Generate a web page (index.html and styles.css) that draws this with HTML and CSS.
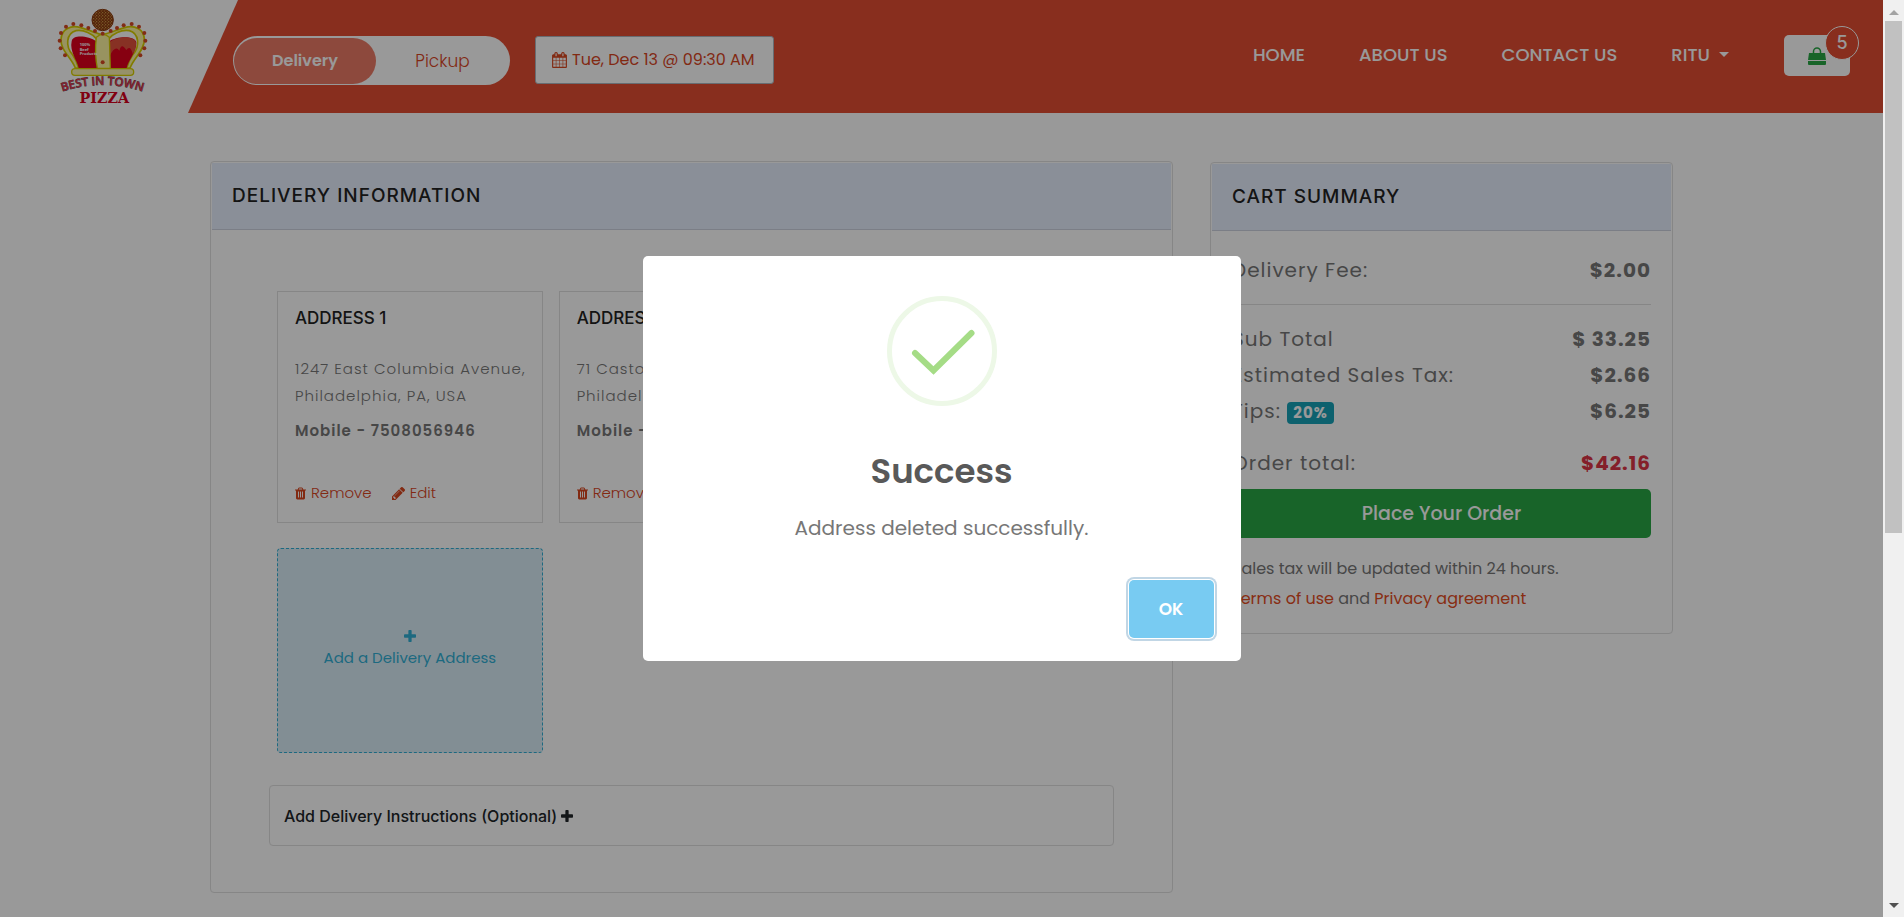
FILE: index.html
```html
<!DOCTYPE html>
<html lang="en">
<head>
<meta charset="utf-8">
<meta name="viewport" content="width=device-width, initial-scale=1">
<title>Best in Town Pizza - Checkout</title>
<link rel="stylesheet" href="styles.css">
</head>
<body>
<svg class="sprite" aria-hidden="true">
  <symbol id="trash" viewBox="192 128 1408 1536"><path d="M704 1376v-704q0-14-9-23t-23-9h-64q-14 0-23 9t-9 23v704q0 14 9 23t23 9h64q14 0 23-9t9-23zm256 0v-704q0-14-9-23t-23-9h-64q-14 0-23 9t-9 23v704q0 14 9 23t23 9h64q14 0 23-9t9-23zm256 0v-704q0-14-9-23t-23-9h-64q-14 0-23 9t-9 23v704q0 14 9 23t23 9h64q14 0 23-9t9-23zm-544-992h448l-48-117q-7-9-17-11h-317q-10 2-17 11zm928 32v64q0 14-9 23t-23 9h-96v948q0 83-47 143.500t-113 60.500h-832q-66 0-113-58.500t-47-141.500v-952h-96q-14 0-23-9t-9-23v-64q0-14 9-23t23-9h309l70-167q15-37 54-63t79-26h320q40 0 79 26t54 63l70 167h309q14 0 23 9t9 23z"/></symbol>
  <symbol id="pencil" viewBox="128 149 1515 1515"><path d="M491 1536l91-91-235-235-91 91v107h128v128h107zm523-928q0-22-22-22-10 0-17 7l-542 542q-7 7-7 17 0 22 22 22 10 0 17-7l542-542q7-7 7-17zm-54-192l416 416-832 832h-416v-416zm683 96q0 53-37 90l-166 166-416-416 166-165q36-38 90-38 53 0 91 38l235 234q37 39 37 91z"/></symbol>
  <symbol id="calendar" viewBox="64 0 1664 1792"><path d="M192 1664h288v-288h-288v288zm352 0h320v-288h-320v288zm-352-352h288v-320h-288v320zm352 0h320v-320h-320v320zm-352-384h288v-288h-288v288zm736 736h320v-288h-320v288zm-384-736h320v-288h-320v288zm768 736h288v-288h-288v288zm-384-352h320v-320h-320v320zm-352-864v-288q0-13-9.500-22.500t-22.500-9.500h-64q-13 0-22.500 9.500t-9.500 22.500v288q0 13 9.500 22.500t22.500 9.500h64q13 0 22.500-9.500t9.500-22.500zm736 864h288v-320h-288v320zm-384-384h320v-288h-320v288zm384 0h288v-288h-288v288zm32-480v-288q0-13-9.500-22.500t-22.500-9.500h-64q-13 0-22.500 9.500t-9.500 22.500v288q0 13 9.500 22.500t22.500 9.500h64q13 0 22.500-9.500t9.500-22.500zm384-64v1280q0 52-38 90t-90 38h-1408q-52 0-90-38t-38-90v-1280q0-52 38-90t90-38h128v-96q0-66 47-113t113-47h64q66 0 113 47t47 113v96h384v-96q0-66 47-113t113-47h64q66 0 113 47t47 113v96h128q52 0 90 38t38 90z"/></symbol>
  <symbol id="plus" viewBox="192 128 1408 1408"><path d="M1600 736v192q0 40-28 68t-68 28h-416v416q0 40-28 68t-68 28h-192q-40 0-68-28t-28-68v-416h-416q-40 0-68-28t-28-68v-192q0-40 28-68t68-28h416v-416q0-40 28-68t68-28h192q40 0 68 28t28 68v416h416q40 0 68 28t28 68z"/></symbol>
  <symbol id="bag" viewBox="0 0 18 18"><path d="M1 6h16l1 7H0zM0 14h18v3q0 1-1 1H1q-1 0-1-1z"/><path d="M5.500 8V4.500a3.500 3.500 0 0 1 7 0V8" fill="none" stroke="currentColor" stroke-width="1.500"/></symbol>
</svg>

<div class="window">
  <div class="page">
    <header class="header">
      <a class="logo" href="#" aria-label="Best in Town Pizza">
        <svg class="logo-art" viewBox="168 21 282 294" role="img" aria-hidden="true">
          <defs>
            <pattern id="crust" width="9" height="9" patternUnits="userSpaceOnUse">
              <rect width="9" height="9" fill="#8a3a10"/><circle cx="2" cy="2" r="2" fill="#d8a850"/><circle cx="7" cy="6" r="2" fill="#c88a3c"/>
            </pattern>
            <path id="arc" d="M179 277Q308 233 436 277"/>
          </defs>
          <circle cx="308" cy="60" r="32" fill="url(#crust)" stroke="#8a3a10" stroke-width="3"/>
          <g stroke="#d8cf00" stroke-width="5" stroke-linejoin="round">
            <path fill="#fdf6a0" d="M226 204C214 172 182 152 183 119C184 86 214 74 242 83C268 90 294 102 306 104C322 102 350 90 374 83C402 74 433 86 433 119C433 152 402 172 390 204Z"/>
            <path fill="#fff" d="M217 163C196 140 198 100 228 92C252 88 278 102 289 116L290 200L236 204C232 188 226 176 217 163ZM399 163C420 140 418 100 388 92C362 88 338 102 327 116L330 200L380 204C384 188 390 176 399 163Z"/>
          </g>
          <path fill="#df001d" d="M236 204C232 182 208 154 215 124C219 102 266 108 289 124L293 204Z"/>
          <path fill="#df001d" d="M380 204C384 182 410 154 409 128C407 106 350 108 327 124L330 204Z"/>
          <path fill="#e2523c" d="M329 126C352 108 405 108 408 128Q409 146 398 162Q391 134 379 150Q364 126 358 152Q346 134 329 168Z"/>
          <path d="M289 112Q308 94 328 112L331 205H292Q283 158 289 112Z" fill="#fdf6a0" stroke="#d8cf00" stroke-width="4"/>
          <rect x="215" y="206" width="186" height="20" rx="10" fill="#fbf2b0" stroke="#d8cf00" stroke-width="4"/>
          <g fill="#d84a24">
            <circle cx="195" cy="166" r="6"/><circle cx="182" cy="145" r="6"/><circle cx="179" cy="122" r="6"/><circle cx="183" cy="99" r="6"/><circle cx="198" cy="80" r="6"/><circle cx="220" cy="72" r="6"/><circle cx="244" cy="76" r="6"/><circle cx="265" cy="84" r="6"/><circle cx="285" cy="93" r="6"/><circle cx="308" cy="101" r="6"/><circle cx="332" cy="93" r="6"/><circle cx="351" cy="84" r="6"/><circle cx="371" cy="76" r="6"/><circle cx="395" cy="72" r="6"/><circle cx="417" cy="80" r="6"/><circle cx="433" cy="99" r="6"/><circle cx="436" cy="122" r="6"/><circle cx="433" cy="145" r="6"/><circle cx="421" cy="166" r="6"/><circle cx="308" cy="187" r="6"/>
          </g>
          <g class="logo-small"><text x="239" y="139">100%</text><text x="239" y="152">Beef</text><text x="239" y="166">Products</text></g>
          <text class="logo-town"><textPath href="#arc" startOffset="50%" text-anchor="middle">BEST IN TOWN</textPath></text>
          <text class="logo-pizza" x="313" y="308" text-anchor="middle">PIZZA</text>
        </svg>
      </a>
      <div class="navbar">
        <div class="toggle" role="group" aria-label="Order type">
          <button class="toggle-item is-active" type="button">Delivery</button>
          <button class="toggle-item" type="button">Pickup</button>
        </div>
        <button class="date" type="button"><svg class="icon icon-calendar"><use href="#calendar"/></svg>Tue, Dec 13 @ 09:30 AM</button>
        <nav class="menu">
          <a href="#">HOME</a>
          <a href="#">ABOUT US</a>
          <a href="#">CONTACT US</a>
          <a class="user" href="#">RITU</a>
        </nav>
        <button class="cart" type="button" aria-label="Cart, 5 items"><svg class="icon icon-bag"><use href="#bag"/></svg><span class="cart-count">5</span></button>
      </div>
    </header>

    <main class="content">
      <section class="card">
        <h1 class="card-head">DELIVERY INFORMATION</h1>
        <div class="delivery-body">
          <div class="addresses">
            <article class="address">
              <h2 class="address-title">ADDRESS 1</h2>
              <p class="address-text">1247 East Columbia Avenue, Philadelphia, PA, USA</p>
              <p class="address-phone">Mobile - 7508056946</p>
              <div class="address-actions">
                <a href="#"><svg class="icon icon-trash"><use href="#trash"/></svg>Remove</a>
                <a href="#"><svg class="icon icon-pencil"><use href="#pencil"/></svg>Edit</a>
              </div>
            </article>
            <article class="address">
              <h2 class="address-title">ADDRESS 2</h2>
              <p class="address-text">71 Castor Avenue,<br>Philadelphia, PA, USA</p>
              <p class="address-phone">Mobile - 7508056946</p>
              <div class="address-actions">
                <a href="#"><svg class="icon icon-trash"><use href="#trash"/></svg>Remove</a>
                <a href="#"><svg class="icon icon-pencil"><use href="#pencil"/></svg>Edit</a>
              </div>
            </article>
            <button class="add-address" type="button"><svg class="icon icon-plus"><use href="#plus"/></svg>Add a Delivery Address</button>
          </div>
          <button class="instructions" type="button">Add Delivery Instructions (Optional)<svg class="icon icon-plus"><use href="#plus"/></svg></button>
        </div>
      </section>

      <aside class="card summary">
        <h2 class="card-head">CART SUMMARY</h2>
        <div class="summary-body">
          <div class="row"><span>Delivery Fee:</span><b>$2.00</b></div>
          <hr class="rule">
          <div class="row"><span>Sub Total</span><b>$ 33.25</b></div>
          <div class="row"><span>Estimated Sales Tax:</span><b>$2.66</b></div>
          <div class="row"><span>Tips: <span class="badge">20%</span></span><b>$6.25</b></div>
          <div class="row total"><span>Order total:</span><b>$42.16</b></div>
          <button class="place" type="button">Place Your Order</button>
          <p class="note">Sales tax will be updated within 24 hours.</p>
          <p class="note"><a href="#">Terms of use</a> and <a href="#">Privacy agreement</a></p>
        </div>
      </aside>
    </main>

    <div class="overlay">
      <div class="modal" role="dialog" aria-modal="true" aria-labelledby="modal-title">
        <svg class="modal-icon" viewBox="0 0 110 110" aria-hidden="true">
          <circle cx="55" cy="55" r="52.500" fill="none" stroke="#edf8e7" stroke-width="5"/>
          <path d="M28 57L46.500 74.500L84.500 37" fill="none" stroke="#a5dc86" stroke-width="6" stroke-linecap="round"/>
        </svg>
        <h2 class="modal-title" id="modal-title">Success</h2>
        <p class="modal-text">Address deleted successfully.</p>
        <div class="modal-foot"><button class="ok" type="button">OK</button></div>
      </div>
    </div>
  </div>
  <div class="scrollbar" aria-hidden="true">
    <svg class="arrow arrow-up" viewBox="0 0 10 5"><path d="M0 5L5 0L10 5Z"/></svg>
    <div class="track"><div class="thumb"></div></div>
    <svg class="arrow" viewBox="0 0 10 5"><path d="M0 0L5 5L10 0Z"/></svg>
  </div>
</div>
</body>
</html>
```
FILE: styles.css
```css
* { box-sizing: border-box; }

body {
  margin: 0;
  background: #fff;
  color: #777;
  font: 400 16px/24px Poppins, "Open Sans", sans-serif;
}

h1, h2, p { margin: 0; }
a { color: #e34d1f; text-decoration: none; }
button { font: inherit; cursor: pointer; }

.sprite { position: absolute; width: 0; height: 0; }
.icon { display: inline-block; flex: none; fill: currentColor; }

.window { display: flex; height: 100vh; overflow: hidden; }
.page { position: relative; flex: 1; min-width: 0; overflow: hidden; }

/* Header */
.header { display: flex; height: 113px; }
.logo { flex: none; width: 188px; padding: 7px 0 0 56px; }
.logo-art { display: block; width: 94px; height: 98px; }
.logo-small { fill: #fff; font: 700 12px "Open Sans", sans-serif; }
.logo-town { fill: #e0324a; stroke: #444; stroke-width: 2px; paint-order: stroke; font: 600 35px "Open Sans", sans-serif; }
.logo-pizza { fill: #d8001d; font: 700 43px "DejaVu Serif", serif; }

.navbar {
  display: flex;
  flex: 1;
  align-items: flex-start;
  padding: 36px 33px 0 45px;
  background: #e34d32;
  clip-path: polygon(50px 0, 100% 0, 100% 100%, 0 100%);
}
.toggle {
  display: flex;
  width: 277px;
  height: 49px;
  padding: 2px 1px 1px;
  border-radius: 25px;
  background: #fff;
}
.toggle-item {
  flex: 1;
  padding: 0;
  border: 0;
  border-radius: 23px;
  background: none;
  color: #d9461f;
  font-size: 17px;
  font-weight: 300;
}
.toggle-item.is-active { flex: 0 0 142px; background: #eb7b67; color: #fff; font-size: 16px; font-weight: 600; }
.date {
  display: flex;
  align-items: center;
  gap: 5px;
  height: 48px;
  margin-left: 25px;
  padding: 0 18px 0 16px;
  border: 1px solid #adb5bd;
  border-radius: 3px;
  background: #fff;
  color: #d9461f;
}
.icon-calendar { width: 15px; height: 16px; }
.menu { display: flex; gap: 54px; margin-left: auto; padding-top: 7px; font-size: 18px; font-weight: 500; }
.menu a { color: #fff; }
.user::after {
  display: inline-block;
  margin-left: 9px;
  border: 5px solid transparent;
  border-top-color: #fff;
  border-bottom: 0;
  vertical-align: 4px;
  content: "";
}
.cart {
  position: relative;
  display: flex;
  align-items: center;
  justify-content: center;
  width: 66px;
  height: 41px;
  margin: -1px 0 0 55px;
  padding: 0;
  border: 0;
  border-radius: 5px;
  background: #fff;
  color: #28a745;
}
.icon-bag { width: 18px; height: 18px; }
.cart-count {
  position: absolute;
  top: -9px;
  right: -9px;
  width: 34px;
  height: 34px;
  border: 1px solid #fff;
  border-radius: 50%;
  background: #e34d32;
  color: #fff;
  font: 500 18px/32px Inter, sans-serif;
  text-align: center;
}

/* Content */
.content {
  display: grid;
  grid-template-columns: 963fr 463fr;
  gap: 37px;
  align-items: start;
  max-width: 1463px;
  margin: 48px auto 0;
}
.card { border: 1px solid #dfdfdf; border-radius: 4px; padding: 1px; background: #fff; }
.summary { margin-top: 1px; }
.card-head {
  padding: 19px 20px 20px;
  border-bottom: 1px solid #cdd3e0;
  background: #e7eefd;
  color: #222;
  font: 500 19px/27px Inter, sans-serif;
  letter-spacing: 1px;
}
.delivery-body { padding: 61px 57px 45px; }
.addresses { display: grid; grid-template-columns: repeat(3, minmax(0, 1fr)); gap: 25px 16px; padding: 0 8px; }
.address { height: 232px; padding: 14px 12px 14px 17px; border: 1px solid #dfdfdf; font-size: 15px; }
.address-title { color: #222; font: 500 17px/24px Inter, sans-serif; }
.address-text { margin-top: 25px; font-weight: 300; line-height: 27px; letter-spacing: 1px; }
.address-phone { margin-top: 8px; font-weight: 600; line-height: 27px; letter-spacing: 1px; }
.address-actions { display: flex; gap: 20px; margin-top: 37px; font-weight: 300; line-height: 24px; }
.address-actions a { display: flex; align-items: center; gap: 5px; color: #d9461f; }
.icon-trash { width: 11px; height: 13px; }
.icon-pencil { width: 13px; height: 13px; }
.icon-plus { width: 12px; height: 12px; }
.add-address {
  display: flex;
  flex-direction: column;
  grid-column: 1;
  align-items: center;
  justify-content: center;
  gap: 4px;
  height: 205px;
  padding: 0 0 2px;
  border: 1px dashed #31b0d5;
  border-radius: 4px;
  background: #d9edf7;
  color: #31b0d5;
  font-size: 15px;
}
.instructions {
  display: flex;
  align-items: center;
  gap: 4px;
  width: 100%;
  height: 61px;
  margin-top: 32px;
  padding: 0 14px;
  border: 1px solid #dfdfdf;
  border-radius: 4px;
  background: #fff;
  color: #212529;
  font: 500 16px/24px Inter, sans-serif;
}

.summary-body { padding: 21px 20px 18px; }
.row { display: flex; justify-content: space-between; font-size: 20px; line-height: 36px; letter-spacing: 1px; }
.rule { margin: 16px 0; border: 0; border-top: 1px solid #dfdfdf; }
.badge {
  display: inline-block;
  padding: 0 6px;
  border-radius: 4px;
  background: #17a2b8;
  color: #fff;
  font-size: 15px;
  font-weight: 700;
  line-height: 22px;
}
.total { margin-top: 16px; }
.total b { color: #dc3545; }
.place {
  width: 100%;
  height: 49px;
  margin: 8px 0 16px;
  padding: 0;
  border: 0;
  border-radius: 5px;
  background: #28a745;
  color: #fff;
  font-size: 19px;
  font-weight: 500;
}
.note { font-size: 16px; line-height: 30px; }

/* Dialog */
.overlay {
  position: absolute;
  inset: 0;
  display: flex;
  align-items: center;
  justify-content: center;
  background: rgba(0, 0, 0, .4);
}
.modal {
  width: 598px;
  max-width: 100%;
  padding: 40px 27px 23px;
  border-radius: 5px;
  background: #fff;
  text-align: center;
}
.modal-icon { display: block; width: 110px; height: 110px; margin: 0 auto; }
.modal-title { margin-top: 41px; color: #595959; font-size: 34px; font-weight: 600; line-height: 48px; }
.modal-text { margin-top: 17px; color: #777; font-size: 20px; line-height: 32px; }
.modal-foot { display: flex; justify-content: flex-end; margin-top: 36px; }
.ok {
  width: 85px;
  height: 58px;
  padding: 0;
  border: 0;
  border-radius: 5px;
  background: #78cbf2;
  box-shadow: 0 0 0 1px #fff, 0 0 0 3px rgba(43, 114, 165, .29);
  color: #fff;
  font-size: 17px;
  font-weight: 600;
}

/* Window scrollbar */
.scrollbar {
  display: flex;
  flex-direction: column;
  align-items: center;
  width: 21px;
  padding: 10px 0 9px;
  background: #f0f0f0;
}
.arrow { width: 10px; height: 5px; fill: #505050; }
.arrow-up { fill: #a3a3a3; }
.track { flex: 1; width: 17px; margin: 6px 0; }
.thumb { height: 58.5%; background: #c1c1c1; }
```
